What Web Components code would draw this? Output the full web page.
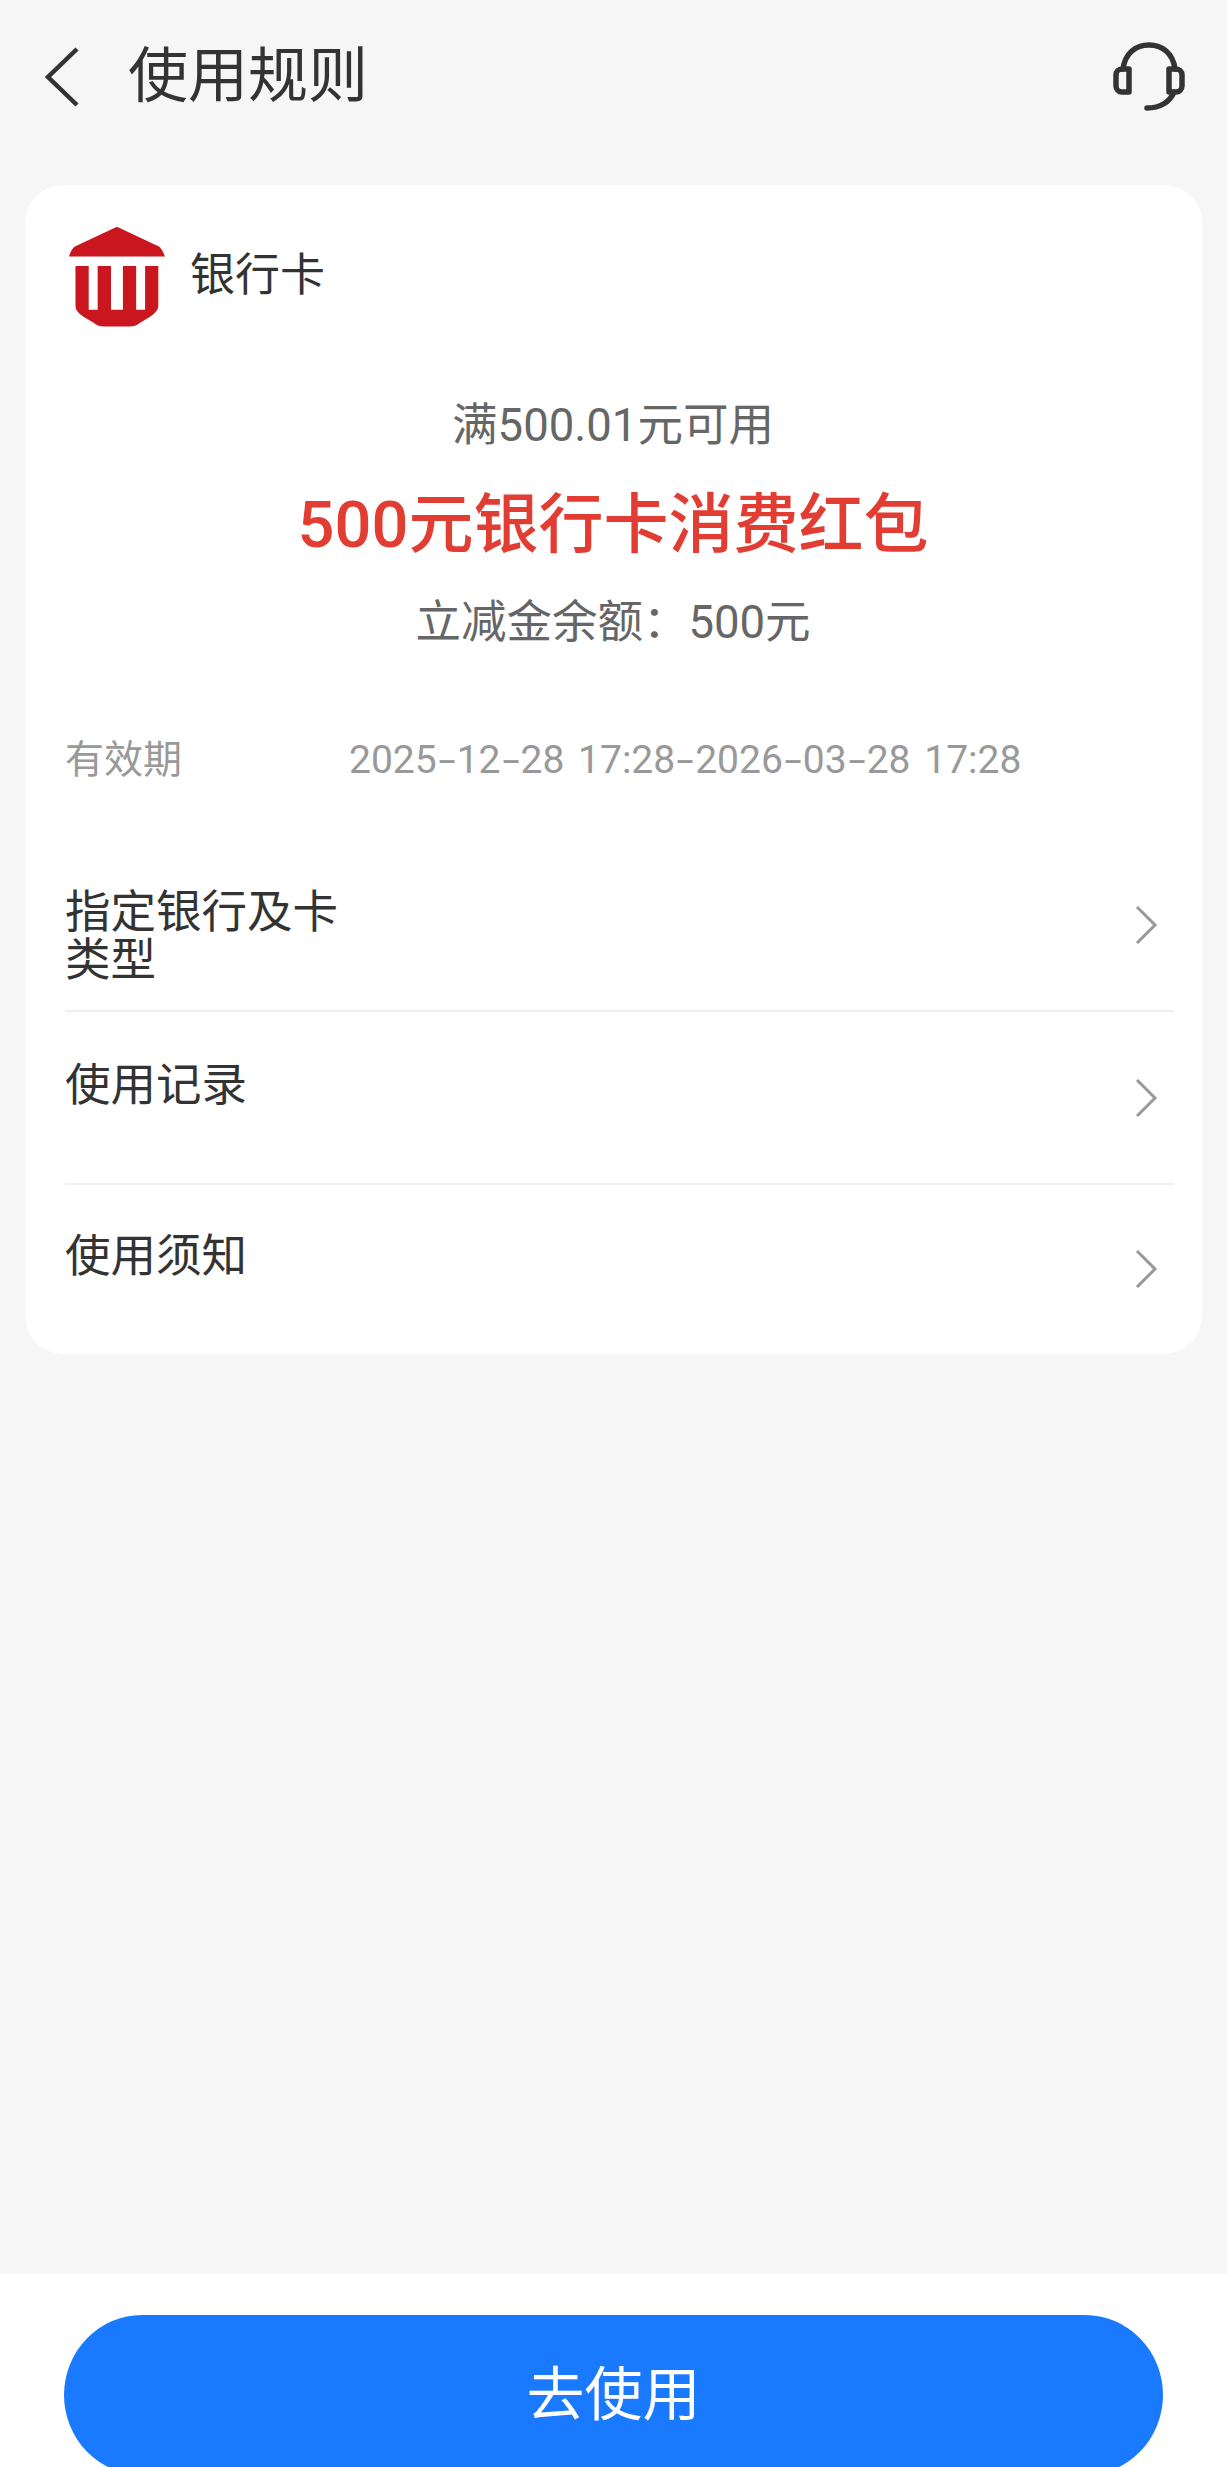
<!DOCTYPE html>
<html lang="zh-CN">
<head>
<meta charset="UTF-8">
<title>使用规则</title>
<style>
  html, body { margin: 0; height: 100%; }
  body { font-family: Roboto, "Noto Sans CJK SC", sans-serif; color: #333; background: #f6f6f6; }
</style>
</head>
<body>

<rule-page>
  <top-bar slot="top">使用规则</top-bar>
  <rule-card>
    <card-brand>银行卡</card-brand>
    <coupon-info>
      <span slot="limit">满500.01元可用</span>
      <span slot="name">500元银行卡消费红包</span>
      <span slot="balance">立减金余额&#xFF1A;500元</span>
    </coupon-info>
    <valid-row label="有效期" value="2025-12-28 17:28-2026-03-28 17:28"></valid-row>
    <link-row>指定银行及卡<br>类型</link-row>
    <link-row>使用记录</link-row>
    <link-row last>使用须知</link-row>
  </rule-card>
  <action-bar slot="bottom">去使用</action-bar>
</rule-page>

<script>
  // every element keeps its own markup and style in a shadow root
  function define(name, html) {
    customElements.define(name, class extends HTMLElement {
      connectedCallback() {
        if (this.shadowRoot) return;
        this.attachShadow({ mode: 'open' });
        this.shadowRoot.innerHTML = typeof html === 'function' ? html(this) : html;
      }
    });
  }

  define('rule-page', `
    <style>
      :host { display: flex; flex-direction: column; height: 2467px; overflow: hidden; background: #f6f6f6; }
      main { flex: 1; padding: 0 25px; }
    </style>
    <slot name="top"></slot>
    <main><slot></slot></main>
    <slot name="bottom"></slot>
  `);

  define('top-bar', `
    <style>
      :host { display: flex; align-items: center; height: 185px; box-sizing: border-box; padding: 0 41px 31px 44px; }
      .title { flex: 1; margin-left: 48px; font-size: 60px; line-height: 70px; color: #333; }
      svg { display: block; }
    </style>
    <svg width="36" height="60" viewBox="0 0 36 60" fill="none" stroke="#333" stroke-width="4.5">
      <path d="M33 2 L4 30 L33 58"/>
    </svg>
    <div class="title"><slot></slot></div>
    <svg width="74" height="70" viewBox="0 0 74 70" fill="none" stroke="#333" stroke-width="5.5" stroke-linecap="round" stroke-linejoin="round">
      <path d="M11 27 C13 11 24 3 37 3 C50 3 61 11 63 27"/>
      <path d="M17 27 H10 A6 6 0 0 0 4 33 V44 A6 6 0 0 0 10 50 H17 Z"/>
      <path d="M57 27 H64 A6 6 0 0 1 70 33 V44 A6 6 0 0 1 64 50 H57 Z"/>
      <path d="M62 50 C58 60 48 66 35 66"/>
    </svg>
  `);

  define('rule-card', `
    <style>
      :host { display: block; height: 1169px; box-sizing: border-box; padding: 41px 28px 0 40px; background: #fff; border-radius: 38px; }
    </style>
    <slot></slot>
  `);

  define('card-brand', `
    <style>
      :host { display: flex; align-items: center; gap: 25px; margin-left: 4px; height: 101px; }
      .text { font-size: 45px; line-height: 54px; color: #333; margin-top: -1px; }
      svg { display: block; flex: none; }
    </style>
    <svg width="96" height="101" viewBox="18.5 6 96.5 101" fill="#c9161f">
      <path d="M66.7 6.5 L25 26 Q21 28 18.5 36.5 H115 Q112 28 108.3 26 Z"/>
      <path d="M25 46 H38.3 V90 H47.3 V46 H60.7 V90 H72.7 V46 H86 V90 H95 V46 H108.3 V86 Q108 92 100 97 L90 103 Q86 106.7 80 106.7 H53 Q47 106.7 43.3 103 L33 97 Q25 92 25 86 Z"/>
    </svg>
    <div class="text"><slot></slot></div>
  `);

  define('coupon-info', `
    <style>
      :host { display: flex; flex-direction: column; align-items: center; padding-top: 75px; margin-right: 13px; }
      div { white-space: nowrap; }
      .limit { font-size: 45.5px; line-height: 48px; color: #666; }
      .name { font-size: 65px; line-height: 60px; margin-top: 45px; color: #e23d33; font-weight: 500; }
      .balance { font-size: 45.5px; line-height: 48px; margin-top: 44px; color: #666; }
    </style>
    <div class="limit"><slot name="limit"></slot></div>
    <div class="name"><slot name="name"></slot></div>
    <div class="balance"><slot name="balance"></slot></div>
  `);

  // hyphens in the date are drawn wider than the font's own
  define('valid-row', el => `
    <style>
      :host { display: flex; margin: 89px 0 55px; font-size: 39px; line-height: 48px; color: #999; white-space: nowrap; }
      .label { width: 284px; }
      .value { word-spacing: 4px; }
      .dash { display: inline-block; width: 20px; text-align: center; transform: scaleX(1.6); }
    </style>
    <div class="label">${el.getAttribute('label')}</div>
    <div class="value">${el.getAttribute('value').replace(/-/g, '<span class="dash">-</span>')}</div>
  `);

  define('link-row', `
    <style>
      :host { display: flex; justify-content: space-between; height: 173px; box-sizing: border-box; padding: 50px 16px 0 0; border-bottom: 2px solid #eeeeee; font-size: 45.5px; line-height: 48px; color: #333; }
      :host([last]) { border-bottom: 0; height: 168px; padding-top: 48px; }
      svg { display: block; flex: none; margin-top: 17px; }
    </style>
    <div><slot></slot></div>
    <svg width="24" height="38" viewBox="0 0 24 38" fill="none" stroke="#999" stroke-width="3">
      <path d="M3 1 L21 19 L3 37"/>
    </svg>
  `);

  define('action-bar', `
    <style>
      :host { display: block; height: 193px; box-sizing: border-box; padding: 41px 64px 0; background: #fff; overflow: hidden; }
      .btn { height: 160px; display: flex; align-items: center; justify-content: center; background: #1a7aff; border-radius: 78px / 80px; color: #fff; font-size: 58px; padding-bottom: 10px; box-sizing: border-box; }
    </style>
    <div class="btn"><slot></slot></div>
  `);
</script>
</body>
</html>
